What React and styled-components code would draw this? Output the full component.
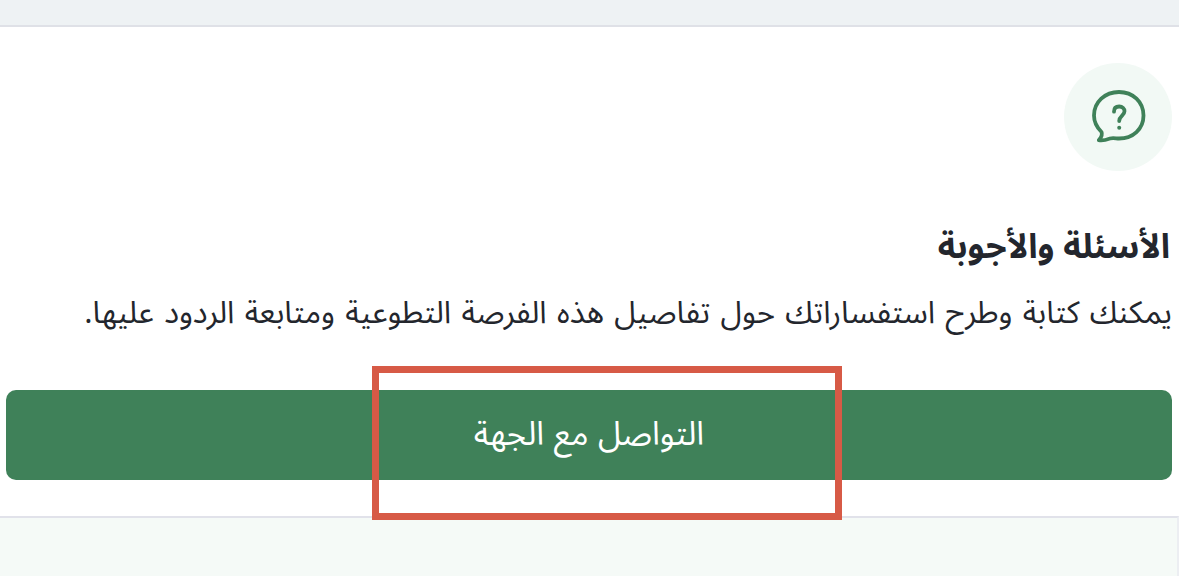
import React from "react";
import styled, { createGlobalStyle } from "styled-components";

const GlobalStyle = createGlobalStyle`
  * { box-sizing: border-box; }
  body {
    margin: 0;
    overflow: hidden;
    background: #fff;
    font-family: "Noto Sans Arabic", "DejaVu Sans", sans-serif;
    color: #23262d;
  }
`;

const Page = styled.main`
  height: 576px;
  display: flex;
  flex-direction: column;
  overflow: hidden;
`;

const TopStrip = styled.div`
  flex: 0 0 27px;
  background: #eef2f4;
  border-bottom: 2px solid #dfe1e7;
`;

const Card = styled.section`
  flex: 0 0 489px;
  display: flex;
  flex-direction: column;
  align-items: flex-start;
  padding: 36px 7px 0 6px;
  background: #fff;
`;

const IconCircle = styled.div`
  width: 108px;
  height: 108px;
  border-radius: 50%;
  background: #f2f9f5;
  display: flex;
  align-items: center;
  justify-content: center;
`;

const Title = styled.h2`
  margin: 46px 2px 0 0;
  height: 60px;
  line-height: 60px;
  font-size: 34px;
  font-weight: 700;
  white-space: nowrap;
`;

const Description = styled.p`
  margin: 8px 0 0;
  height: 56px;
  line-height: 56px;
  font-size: 31px;
  word-spacing: 2.3px;
  white-space: nowrap;
`;

const ButtonArea = styled.div`
  position: relative;
  width: 100%;
  margin-top: 49px;
`;

const ContactButton = styled.button`
  display: block;
  width: 100%;
  height: 90px;
  padding: 0;
  border: 0;
  border-radius: 10px;
  background: #3f8159;
  color: #fff;
  font-family: inherit;
  font-size: 33px;
  word-spacing: 1px;
  line-height: 90px;
`;

const Highlight = styled.div`
  position: absolute;
  left: 366px;
  top: -24px;
  width: 470px;
  height: 154px;
  border: 7px solid #d75a46;
  pointer-events: none;
`;

const BottomPanel = styled.div`
  flex: 1;
  background: #f5faf7;
  border-top: 2px solid #e1e2ea;
  border-right: 2px solid #eceef2;
`;

const QuestionBubble = () => (
  <svg width="60" height="60" viewBox="0 0 60 60" fill="none" stroke="#3f8159" strokeLinecap="round" strokeLinejoin="round">
    <path strokeWidth="3.8" d="M31 5C45 5 55.500 15 55.500 28.500C55.500 42 45 51.500 31 51.500C28 51.500 25 50.500 22 51.500C18 53 14 54 10.800 53.200C12.500 51 15 48.500 13.500 45C9 40.500 6 36 6 28.500C6 15 17 5 31 5Z" />
    <path strokeWidth="3.8" d="M26 24.700C26 21.300 28 19.500 31.200 19.500C34.400 19.500 36.500 21.400 36.500 24.200C36.500 28.500 31.200 28.700 31.200 34" />
    <circle cx="31.200" cy="40.800" r="2" fill="#3f8159" stroke="none" />
  </svg>
);

export default function App() {
  return (
    <>
      <GlobalStyle />
      <Page dir="rtl" lang="ar">
        <TopStrip />
        <Card>
          <IconCircle><QuestionBubble /></IconCircle>
          <Title>الأسئلة والأجوبة</Title>
          <Description>يمكنك كتابة وطرح استفساراتك حول تفاصيل هذه الفرصة التطوعية ومتابعة الردود عليها.</Description>
          <ButtonArea>
            <ContactButton type="button">التواصل مع الجهة</ContactButton>
            <Highlight />
          </ButtonArea>
        </Card>
        <BottomPanel />
      </Page>
    </>
  );
}
